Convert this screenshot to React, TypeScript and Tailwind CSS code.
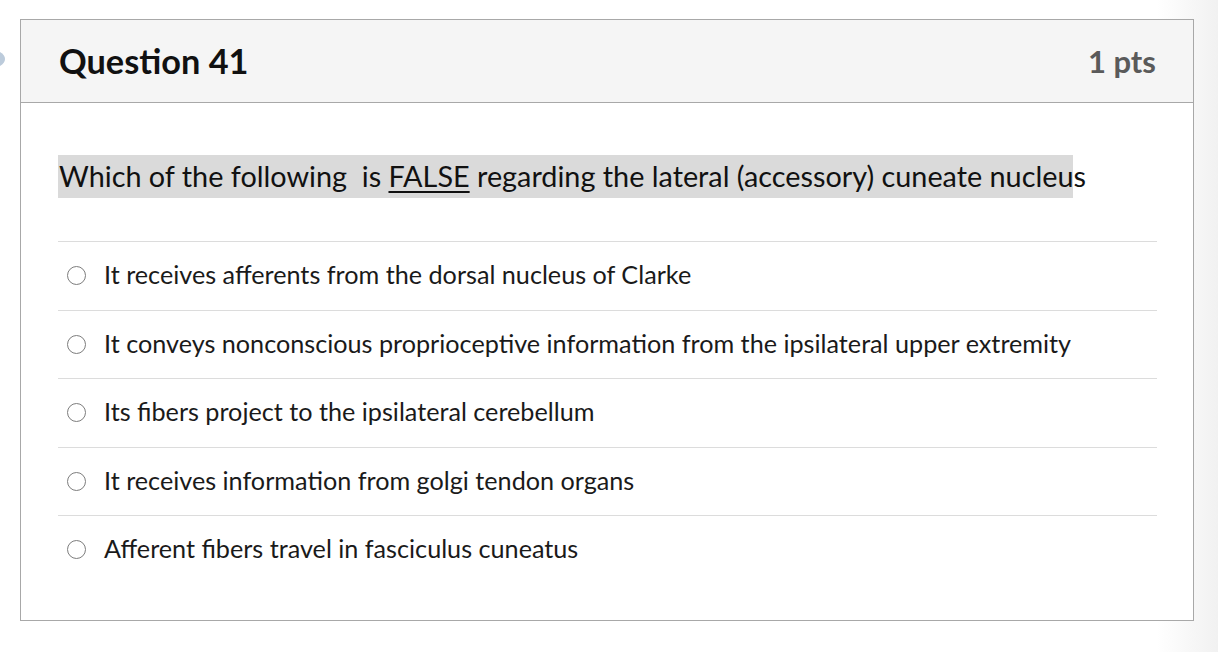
import React from 'react';

const options = [
  'It receives afferents from the dorsal nucleus of Clarke',
  'It conveys nonconscious proprioceptive information from the ipsilateral upper extremity',
  'Its fibers project to the ipsilateral cerebellum',
  'It receives information from golgi tendon organs',
  'Afferent fibers travel in fasciculus cuneatus',
];

const App: React.FC = () => {
  return (
    <div
      className="w-[1218px] h-[652px] flex items-start pt-[19px] bg-[linear-gradient(to_right,#ffffff_95%,#f1f1f1_100%)]"
      style={{ fontFamily: 'Lato, "Open Sans", sans-serif' }}
    >
      <div className="w-[20px] h-[83px] flex items-center">
        <svg width="6" height="16" viewBox="0 0 6 16" className="mt-[-4px]">
          <path d="M0 1 Q5 4 5 8 Q5 12 0 15 Z" fill="#bccbdb" />
        </svg>
      </div>

      <div className="w-[1174px] border border-[#a8a8a8] bg-white">
        <div className="h-[83px] bg-[#f5f5f5] border-b border-[#a8a8a8] flex items-center justify-between pl-[38px] pr-[37px]">
          <span className="text-[34.3px] font-bold text-[#111]">Question 41</span>
          <span className="text-[31px] font-bold text-[#5a5a5a]">1 pts</span>
        </div>

        <div className="pt-[52px] pl-[37px] pr-[36px] pb-[36px]">
          <p className="text-[28.8px] leading-[43px] text-[#111]">
            <span className="inline-block bg-[#dadada] pl-[1px]">
              Which of the following&nbsp; is <span className="underline underline-offset-[4px] decoration-[2px]">FALSE</span> regarding the lateral (accessory) cuneate nucleu
            </span>
            s
          </p>

          <div className="mt-[43px]">
            {options.map((opt, idx) => (
              <div key={idx} className="h-[68.5px] flex items-center border-t border-[#dcdcdc]">
                <span className="ml-[9px] w-[19px] h-[19px] rounded-full border-[1.5px] border-[#7d7d7d] bg-white shrink-0" />
                <span className="ml-[18px] text-[25.2px] text-[#1a1a1a] mt-[-1px]">{opt}</span>
              </div>
            ))}
          </div>
        </div>
      </div>
    </div>
  );
};

export default App;
